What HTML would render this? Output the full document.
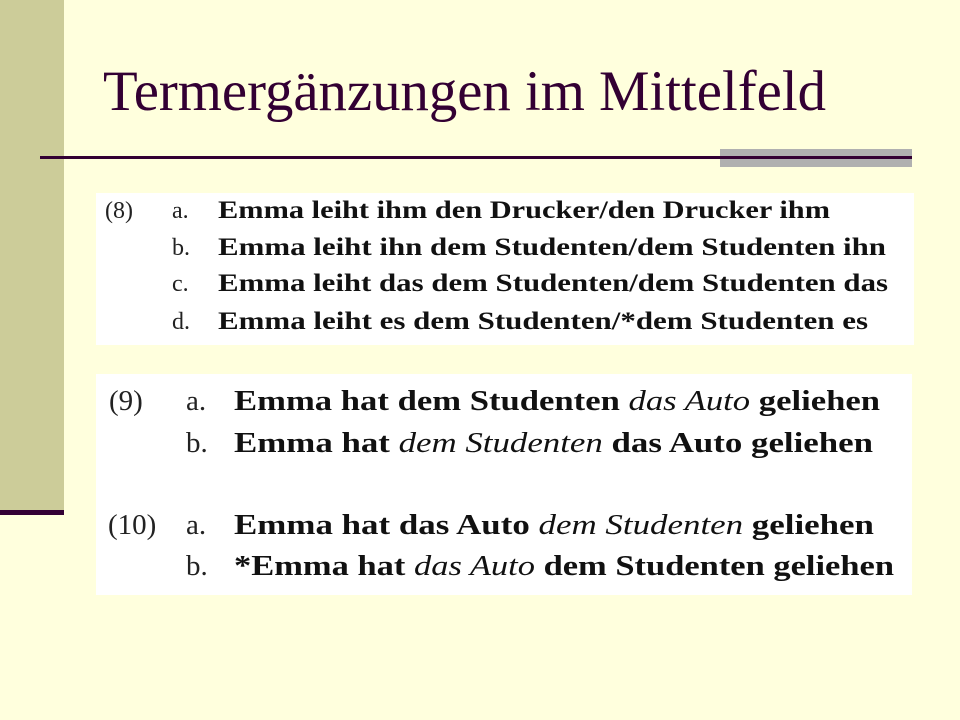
<!DOCTYPE html>
<html><head><meta charset="utf-8"><style>
html,body{margin:0;padding:0;background:#ffffdd;}
svg{display:block;}
</style></head><body>
<svg width="960" height="720" xmlns="http://www.w3.org/2000/svg">
<rect width="960" height="720" fill="#ffffdd"/>
<rect x="0" y="0" width="64" height="510" fill="#cccc99"/>
<rect x="0" y="510" width="64" height="5" fill="#330033"/>
<text x="103" y="110" font-family="Liberation Serif, serif" font-size="57" fill="#330033" textLength="723" lengthAdjust="spacingAndGlyphs">Termergänzungen im Mittelfeld</text>
<rect x="720" y="149" width="192" height="18" fill="#b0b0b0"/>
<rect x="40" y="156" width="872" height="3" fill="#330033"/>
<rect x="96" y="193" width="818" height="152" fill="#ffffff"/>
<rect x="96" y="374" width="816" height="221" fill="#ffffff"/>
<g font-family="Liberation Serif, serif" font-size="24" fill="#222">
<text x="105" y="218">(8)</text>
<text x="172" y="218">a.</text>
<text x="172" y="255">b.</text>
<text x="172" y="291">c.</text>
<text x="172" y="329">d.</text>
</g>
<g font-family="Liberation Serif, serif" font-size="25" font-weight="bold" fill="#111">
<text x="218" y="218" textLength="612" lengthAdjust="spacingAndGlyphs">Emma leiht ihm den Drucker/den Drucker ihm</text>
<text x="218" y="255" textLength="668" lengthAdjust="spacingAndGlyphs">Emma leiht ihn dem Studenten/dem Studenten ihn</text>
<text x="218" y="291" textLength="670" lengthAdjust="spacingAndGlyphs">Emma leiht das dem Studenten/dem Studenten das</text>
<text x="218" y="329" textLength="650" lengthAdjust="spacingAndGlyphs">Emma leiht es dem Studenten/*dem Studenten es</text>
</g>
<g font-family="Liberation Serif, serif" font-size="29" fill="#222">
<text x="109" y="410">(9)</text>
<text x="186" y="410">a.</text>
<text x="186" y="452">b.</text>
<text x="108" y="534">(10)</text>
<text x="186" y="534">a.</text>
<text x="186" y="575">b.</text>
</g>
<g font-family="Liberation Serif, serif" font-size="29" font-weight="bold" fill="#111">
<text x="234" y="410" textLength="646" lengthAdjust="spacingAndGlyphs">Emma hat dem Studenten <tspan font-style="italic" font-weight="normal">das Auto</tspan> geliehen</text>
<text x="234" y="452" textLength="639" lengthAdjust="spacingAndGlyphs">Emma hat <tspan font-style="italic" font-weight="normal">dem Studenten</tspan> das Auto geliehen</text>
<text x="234" y="534" textLength="640" lengthAdjust="spacingAndGlyphs">Emma hat das Auto <tspan font-style="italic" font-weight="normal">dem Studenten</tspan> geliehen</text>
<text x="234" y="575" textLength="660" lengthAdjust="spacingAndGlyphs">*Emma hat <tspan font-style="italic" font-weight="normal">das Auto</tspan> dem Studenten geliehen</text>
</g>
</svg>
</body></html>
